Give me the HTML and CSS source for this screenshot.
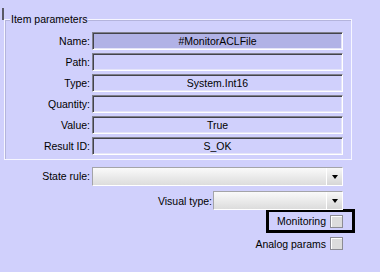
FILE: index.html
```html
<!DOCTYPE html>
<html lang="en">
<head>
    <meta charset="UTF-8" />
    <title>Item parameters</title>
    <link rel="stylesheet" href="styles.css">
</head>
<body>
    <div class="panel">
        <div class="edge-mark"></div>
        <div class="group">
            <span class="legend">Item parameters</span>
            <div class="row">
                <label class="lbl">Name:</label>
                <div class="field filled">#MonitorACLFile</div>
            </div>
            <div class="row">
                <label class="lbl">Path:</label>
                <div class="field"></div>
            </div>
            <div class="row">
                <label class="lbl">Type:</label>
                <div class="field">System.Int16</div>
            </div>
            <div class="row">
                <label class="lbl">Quantity:</label>
                <div class="field"></div>
            </div>
            <div class="row">
                <label class="lbl">Value:</label>
                <div class="field">True</div>
            </div>
            <div class="row">
                <label class="lbl">Result ID:</label>
                <div class="field">S_OK</div>
            </div>
        </div>

        <div class="controls">
            <div class="state-row">
                <label class="lbl wide">State rule:</label>
                <div class="combo"><span class="arrow"></span></div>
            </div>
            <div class="visual-row">
                <label class="vlbl">Visual type:</label>
                <div class="combo short"><span class="arrow"></span></div>
            </div>
            <div class="check-row highlight-row">
                <span class="highlight">
                    <span>Monitoring</span>
                    <span class="check"></span>
                </span>
            </div>
            <div class="check-row">
                <span>Analog params</span>
                <span class="check"></span>
            </div>
        </div>
    </div>
</body>
</html>
```

FILE: styles.css
```css
body {
    margin: 0;
    background: #d0d0fc;
    font-family: "Liberation Sans", Arial, sans-serif;
    font-size: 10.5px;
    color: #000;
}
.panel {
    position: relative;
    width: 380px;
    height: 272px;
    padding-top: 19px;
    box-sizing: border-box;
}
.edge-mark {
    position: absolute;
    left: 2px;
    top: 8px;
    width: 2px;
    height: 12px;
    background: #5a5a66;
}
.group {
    position: relative;
    margin-left: 4px;
    width: 348px;
    box-sizing: border-box;
    border: 1px solid #f6f6ff;
    box-shadow: inset 1px 1px 0 #b4b4dc;
    padding: 12px 8px 4px 0;
}
.legend {
    position: absolute;
    left: 5px;
    top: -7px;
    padding: 0 1px;
    line-height: 13px;
    background: #d0d0fc;
}
.row {
    display: flex;
    height: 18px;
    margin-bottom: 3px;
}
.row:last-child {
    margin-bottom: 0;
}
.lbl {
    width: 87px;
    padding-right: 2px;
    box-sizing: border-box;
    text-align: right;
    line-height: 18px;
    flex: none;
}
.lbl.wide {
    width: 92px;
    line-height: 19px;
}
.field {
    flex: 1;
    box-sizing: border-box;
    border: 1px solid;
    border-color: #80808c #fff #fff #80808c;
    box-shadow: inset 1px 1px 0 #44444c, inset -1px -1px 0 #e4e4f8;
    text-align: center;
    line-height: 16px;
}
.field.filled {
    background: #b1b2e6;
}
.controls {
    padding-right: 37px;
}
.state-row {
    display: flex;
    margin-top: 7px;
    height: 19px;
}
.combo {
    position: relative;
    flex: 1;
    box-sizing: border-box;
    border: 1px solid;
    border-color: #a4a4a8 #fff #fff #a4a4a8;
    background: linear-gradient(#fafafa, #dcdcdc);
}
.combo.short {
    flex: none;
    width: 130px;
    height: 19px;
}
.arrow {
    position: absolute;
    right: 0;
    top: 0;
    bottom: 0;
    width: 16px;
    box-sizing: border-box;
    border-left: 1px solid #fff;
    background: linear-gradient(#f8f8f8, #d6d6d6);
}
.arrow::after {
    content: "";
    position: absolute;
    left: 5px;
    top: 7px;
    border-left: 3px solid transparent;
    border-right: 3px solid transparent;
    border-top: 4px solid #000;
}
.visual-row {
    display: flex;
    justify-content: flex-end;
    align-items: center;
    margin-top: 5px;
    height: 19px;
}
.vlbl {
    margin-right: 1px;
}
.check-row {
    display: flex;
    justify-content: flex-end;
    align-items: center;
    gap: 4px;
    height: 19px;
    margin-top: 1px;
}
.highlight-row {
    margin-top: -1px;
    height: 24px;
    margin-right: -12px;
}
.highlight {
    display: flex;
    align-items: center;
    gap: 4px;
    height: 24px;
    box-sizing: border-box;
    border: 3px solid #000;
    padding: 0 9px 0 8px;
}
.check {
    width: 13px;
    height: 13px;
    box-sizing: border-box;
    border: 1px solid #8c8c94;
    background: #dcdcdc;
    box-shadow: inset 1px 1px 0 #fff;
}
```
